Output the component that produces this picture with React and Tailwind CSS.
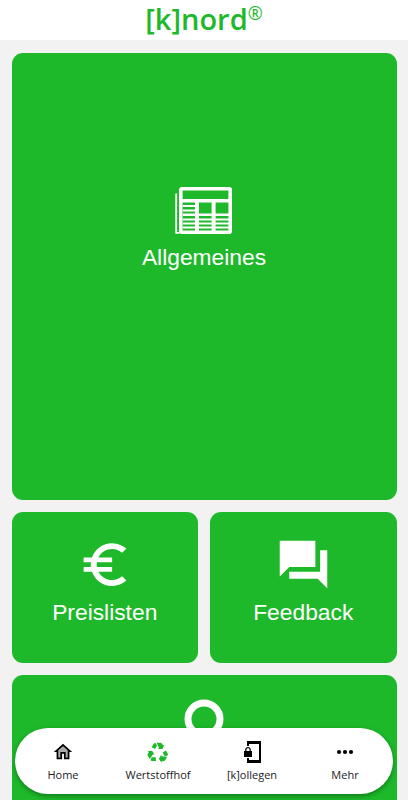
function NewspaperIcon() {
  return (
    <svg width="58" height="48" viewBox="0 0 58 48" fill="none">
      <rect x="5.8" y="1.8" width="49.4" height="43.4" rx="1" stroke="white" strokeWidth="3.6" />
      <path d="M1.2 6.5v39.3h3.4" stroke="white" strokeWidth="1.8" />
      <path
        fill="white"
        d="M5 12h50v3.6H5zM20 14h4v31h-4zM36.6 14h4v31h-4zM8 18h13v2H8zM8 22.4h13v2H8zM8 26.4h47v2.6H8zM8 31.4h47v2H8zM8 35.6h47v2H8zM8 39.6h47v2H8z"
      />
    </svg>
  )
}

function EuroIcon() {
  return (
    <svg width="58" height="57" viewBox="0 0 24 24" fill="white">
      <path d="M15 18.5c-2.51 0-4.68-1.42-5.76-3.5H15v-2H8.58c-.05-.33-.08-.66-.08-1s.03-.67.08-1H15V9H9.24C10.32 6.92 12.5 5.5 15 5.5c1.61 0 3.09.59 4.23 1.57L21 5.3C19.41 3.87 17.3 3 15 3c-3.92 0-7.24 2.51-8.48 6H3v2h3.06c-.04.33-.06.66-.06 1s.02.67.06 1H3v2h3.52c1.24 3.49 4.56 6 8.48 6 2.31 0 4.41-.87 6-2.3l-1.78-1.77c-1.13.98-2.6 1.57-4.22 1.57z" />
    </svg>
  )
}

function FeedbackIcon() {
  return (
    <svg width="57" height="57" viewBox="0 0 24 24" fill="white">
      <path d="M22 6h-3v9H6v3h12l4 4V6zm-5 7V2H2v15l4-4h11z" />
    </svg>
  )
}

function PersonIcon() {
  return (
    <svg width="58" height="58" viewBox="0 0 58 58" fill="none" stroke="white" strokeWidth="7">
      <circle cx="29" cy="24" r="16" />
    </svg>
  )
}

function HomeIcon() {
  return (
    <svg width="22" height="22" viewBox="0 0 24 24">
      <path fill="#aaa" d="M7 10.19V18h2v-6h6v6h2v-7.81l-5-4.5z" />
      <path d="M12 3L2 12h3v8h6v-6h2v6h6v-8h3L12 3zm5 15h-2v-6H9v6H7v-7.81l5-4.5 5 4.5V18z" />
    </svg>
  )
}

// one bent arrow, repeated every 120 degrees
const ARROW =
  'M-7-6.5L-4.5-10.6Q-3.8-11.4-2.4-10.9L-.9-8.5L-3.1-4.5zM-1.4-11.4H2.8Q4.2-11.4 4.9-10.2L6-8.4L7.6-9.2L5.2-4.4H-.2L1.4-5.4z'

function RecycleIcon() {
  return (
    <svg width="24" height="24" viewBox="-13.4 -14.6 27.2 27.2" fill="#1db92a">
      <path d={ARROW} />
      <path d={ARROW} transform="rotate(120)" />
      <path d={ARROW} transform="rotate(240)" />
    </svg>
  )
}

function PhoneLockIcon() {
  return (
    <svg width="24" height="24" viewBox="0 0 24 24">
      <path d="M21 1H7v5h2V4h10v16H9v-2H7v5h14V1z" />
      <path d="M10.8 11V9.5C10.8 8.1 9.4 7 8 7S5.2 8.1 5.2 9.5V11H4v6h8v-6h-1.2zm-1.3 0h-3V9.5c0-.8.7-1.3 1.5-1.3s1.5.5 1.5 1.3V11z" />
    </svg>
  )
}

function MoreIcon() {
  return (
    <svg width="18" height="18" viewBox="0 0 18 18">
      <circle cx="3" cy="9" r="2.1" />
      <circle cx="9" cy="9" r="2.1" />
      <circle cx="15" cy="9" r="2.1" />
    </svg>
  )
}

const navItems = [
  { label: 'Home', icon: <HomeIcon />, width: 'w-[96px]' },
  { label: 'Wertstoffhof', icon: <RecycleIcon />, width: 'w-[94px]' },
  { label: '[k]ollegen', icon: <PhoneLockIcon />, width: 'w-[94px]' },
  { label: 'Mehr', icon: <MoreIcon />, width: 'w-[92px]' },
]

function Tile({ label, icon, className }) {
  return (
    <button className={`flex flex-col items-center rounded-[11px] bg-[#1db92a] text-white ${className}`}>
      {icon}
      {label && <span className="text-[22.8px] leading-[25px]">{label}</span>}
    </button>
  )
}

export default function App() {
  return (
    <div className="relative flex h-[800px] w-[408px] flex-col overflow-hidden bg-[#f2f2f2] font-['Liberation_Sans',Arial,sans-serif]">
      <header className="flex h-10 shrink-0 justify-center bg-white text-[#1db92a]">
        <h1 className="flex font-['Open_Sans',sans-serif] text-[29px] leading-[37px] font-semibold">
          [k]nord<span className="text-[18px] leading-[26px] font-medium">®</span>
        </h1>
      </header>

      <main className="grid grid-cols-2 gap-3 px-[11.5px] pt-[13px]">
        <Tile
          className="col-span-2 h-[447px] gap-2.5 pt-[134px]"
          icon={<NewspaperIcon />}
          label="Allgemeines"
        />
        <Tile className="h-[151px] gap-[7px] pt-6" icon={<EuroIcon />} label="Preislisten" />
        <Tile className="h-[151px] gap-[7px] pt-6" icon={<FeedbackIcon />} label="Feedback" />
        <Tile className="col-span-2 h-[151px] pt-5" icon={<PersonIcon />} />
      </main>

      {/* Floating bottom navigation */}
      <nav className="absolute bottom-[6px] left-[15px] flex h-[66px] w-[378px] rounded-full bg-white shadow-[0_2px_5px_rgba(0,0,0,0.35)]">
        {navItems.map(item => (
          <button key={item.label} className={`flex flex-col items-center pt-3 ${item.width}`}>
            <span className="flex h-6 items-center">{item.icon}</span>
            <span className="mt-[3px] font-['Open_Sans',sans-serif] text-[11px] leading-4 text-[#222]">
              {item.label}
            </span>
          </button>
        ))}
      </nav>
    </div>
  )
}
